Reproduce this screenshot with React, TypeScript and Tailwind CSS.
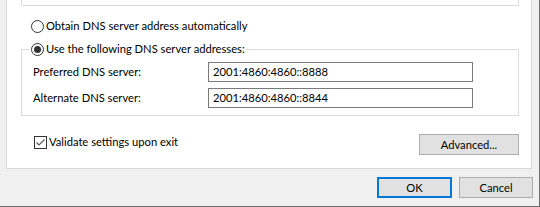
import React from 'react';

const font = { fontFamily: 'Lato, "Noto Sans", sans-serif' };

function Radio({ checked }: { checked?: boolean }) {
  return (
    <span className="w-[13px] h-[13px] rounded-full border border-[#333333] bg-white flex items-center justify-center shrink-0">
      {checked && <span className="w-[7px] h-[7px] rounded-full bg-[#333333]" />}
    </span>
  );
}

function Checkbox() {
  return (
    <span className="w-[13px] h-[13px] border border-[#333333] bg-white flex items-center justify-center shrink-0">
      <svg width="11" height="11" viewBox="0 0 11 11">
        <path d="M1.5 5.5 L4 8 L9.5 2.5" fill="none" stroke="#555555" strokeWidth="1.1" />
      </svg>
    </span>
  );
}

function Field({ label, value }: { label: string; value: string }) {
  return (
    <div className="flex items-center h-[20px]">
      <span className="w-[186px] pl-[11px] shrink-0">{label}</span>
      <div className="w-[265px] h-[20px] border border-[#7a7a7a] bg-white flex items-center pl-[4px]">
        {value}
      </div>
    </div>
  );
}

function Button({ children, primary, className = '' }: { children: React.ReactNode; primary?: boolean; className?: string }) {
  return (
    <button
      className={
        'h-[21px] bg-[#e1e1e1] flex items-center justify-center text-black ' +
        (primary ? 'border-2 border-[#0078d7] ' : 'border border-[#adadad] ') +
        className
      }
    >
      {children}
    </button>
  );
}

export default function App() {
  return (
    <div
      className="w-[540px] h-[207px] bg-[#f0f0f0] border-r border-b border-[#6e6e6e] overflow-hidden text-[11.2px] leading-[14px] text-black flex flex-col"
      style={font}
    >
      {/* Tab page */}
      <div className="ml-[6px] w-[526px] h-[169px] bg-white border-x border-b border-[#d9d9d9] flex flex-col shrink-0">
        <div className="ml-[14px] w-[498px] h-[6px] border-x border-b border-[#dcdcdc]" />

        <label className="mt-[13px] ml-[24px] h-[14px] flex items-center gap-[2px]">
          <Radio />
          <span>Obtain DNS server address automatically</span>
        </label>

        <fieldset className="mt-[9px] ml-[14px] w-[498px] border border-[#dcdcdc] pb-[7px]">
          <legend className="ml-[8px] px-[1px] h-[14px] flex items-center gap-[2px]">
            <Radio checked />
            <span>Use the following DNS server addresses:</span>
          </legend>
          <div className="mt-[6px] flex flex-col gap-[6px]">
            <Field label="Preferred DNS server:" value="2001:4860:4860::8888" />
            <Field label="Alternate DNS server:" value="2001:4860:4860::8844" />
          </div>
        </fieldset>

        <div className="mt-[18px] ml-[27px] w-[485px] flex items-start justify-between">
          <label className="h-[14px] flex items-center gap-[2px] mt-[1px]">
            <Checkbox />
            <span>Validate settings upon exit</span>
          </label>
          <Button className="w-[100px]">Advanced...</Button>
        </div>
      </div>

      <div className="mt-[8px] flex justify-end gap-[7px] pr-[6px]">
        <Button primary className="w-[75px]">OK</Button>
        <Button className="w-[74px]">Cancel</Button>
      </div>
    </div>
  );
}
